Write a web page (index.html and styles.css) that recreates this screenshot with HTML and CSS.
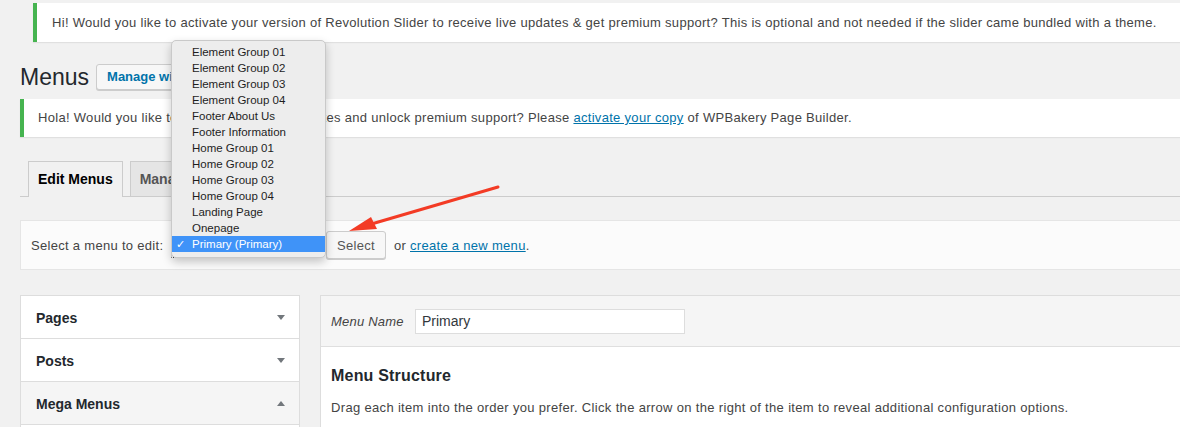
FILE: index.html
```html
<!DOCTYPE html>
<html lang="en">
<head>
<meta charset="utf-8">
<title>Menus</title>
<link rel="stylesheet" href="styles.css">
</head>
<body>
<div class="notice notice-rev"><p>Hi! Would you like to activate your version of Revolution Slider to receive live updates &amp; get premium support? This is optional and not needed if the slider came bundled with a theme.</p></div>
<div class="wrap">
  <div class="title-row">
    <h1 class="page-title">Menus</h1>
    <a class="btn-outline">Manage with Live Preview</a>
  </div>
  <div class="notice notice-vc"><p>Hola! Would you like to receive automatic updates and unlock premium support? Please <a class="link">activate your copy</a> of WPBakery Page Builder.</p></div>
  <nav class="tabs">
    <a class="tab tab-active">Edit Menus</a>
    <a class="tab">Manage Locations</a>
  </nav>
  <div class="manage-menus">
    <label class="manage-label">Select a menu to edit:</label>
    <div class="select-stub"><span class="select-arrow"></span></div>
    <button class="btn">Select</button>
    <span class="manage-or">or <a class="link">create a new menu</a>.</span>
  </div>
  <div class="columns">
    <div class="accordion">
      <div class="acc-section"><h3 class="acc-title">Pages</h3><span class="tri tri-down"></span></div>
      <div class="acc-section"><h3 class="acc-title">Posts</h3><span class="tri tri-down"></span></div>
      <div class="acc-section acc-open"><h3 class="acc-title">Mega Menus</h3><span class="tri tri-up"></span></div>
      <div class="acc-content"></div>
    </div>
    <div class="menu-edit">
      <div class="menu-header">
        <label class="menu-name-label">Menu Name</label>
        <div class="menu-name-input">Primary</div>
      </div>
      <div class="menu-body">
        <h3 class="structure-title">Menu Structure</h3>
        <p class="structure-desc">Drag each item into the order you prefer. Click the arrow on the right of the item to reveal additional configuration options.</p>
      </div>
    </div>
  </div>
</div>

<ul class="popup">
  <li class="popup-item">Element Group 01</li>
  <li class="popup-item">Element Group 02</li>
  <li class="popup-item">Element Group 03</li>
  <li class="popup-item">Element Group 04</li>
  <li class="popup-item">Footer About Us</li>
  <li class="popup-item">Footer Information</li>
  <li class="popup-item">Home Group 01</li>
  <li class="popup-item">Home Group 02</li>
  <li class="popup-item">Home Group 03</li>
  <li class="popup-item">Home Group 04</li>
  <li class="popup-item">Landing Page</li>
  <li class="popup-item">Onepage</li>
  <li class="popup-item popup-selected"><span class="check">&#10003;</span>Primary (Primary)</li>
</ul>

<svg class="red-arrow" width="1180" height="427" viewBox="0 0 1180 427">
  <line x1="498" y1="187" x2="368" y2="225" stroke="#f33b25" stroke-width="3" stroke-linecap="round"/>
  <polygon points="349,231 371,217 377,229" fill="#f33b25"/>
</svg>
</body>
</html>
```

FILE: styles.css
```css
* { box-sizing: border-box; }

html, body {
  margin: 0;
  padding: 0;
}

body {
  width: 1180px;
  height: 427px;
  overflow: hidden;
  position: relative;
  background: #f1f1f1;
  font-family: "Liberation Sans", Arial, sans-serif;
  font-size: 13px;
  color: #444;
}

.link {
  color: #0073aa;
  text-decoration: underline;
}

/* notices */
.notice {
  background: #fff;
  border-left: 4px solid #46b450;
  box-shadow: 0 1px 1px rgba(0, 0, 0, 0.07);
}

.notice p {
  margin: 0;
  line-height: 38px;
  white-space: nowrap;
  letter-spacing: 0.3px;
}

.notice-rev {
  margin: 3px -20px 0 33px;
  padding-left: 15px;
}

.notice-rev p {
  line-height: 39px;
}

.notice-vc {
  margin: 8px -20px 0 0;
  padding-left: 14px;
}

.wrap {
  padding-left: 20px;
}

/* title */
.title-row {
  display: flex;
  align-items: center;
  gap: 7px;
  margin-top: 21px;
  height: 28px;
}

.page-title {
  margin: 0;
  font-size: 23px;
  font-weight: 400;
  color: #23282d;
  line-height: 28px;
}

.btn-outline {
  display: inline-block;
  height: 26px;
  line-height: 24px;
  padding: 0 10px;
  border: 1px solid #ccc;
  border-radius: 3px;
  background: #f7f7f7;
  box-shadow: 0 1px 0 #ccc;
  color: #0073aa;
  font-weight: 700;
  white-space: nowrap;
}

/* tabs */
.tabs {
  display: flex;
  align-items: flex-end;
  gap: 7px;
  margin-top: 24px;
  padding-left: 8px;
  border-bottom: 1px solid #ccc;
  margin-right: -20px;
}

.tab {
  display: block;
  height: 35px;
  line-height: 34px;
  padding: 0 9px;
  border: 1px solid #ccc;
  border-bottom: none;
  background: #e5e5e5;
  color: #555;
  font-size: 14px;
  font-weight: 700;
  white-space: nowrap;
}

.tab-active {
  height: 36px;
  margin-bottom: -1px;
  background: #f1f1f1;
  color: #000;
}

/* manage menus */
.manage-menus {
  display: flex;
  align-items: center;
  margin: 23px -20px 0 0;
  padding: 10px;
  border: 1px solid #e5e5e5;
  background: #fbfbfb;
  letter-spacing: 0.3px;
}

.manage-label {
  flex: 0 0 140px;
  white-space: nowrap;
}

.select-stub {
  position: relative;
  width: 149px;
  height: 26px;
  margin-right: 6px;
  background: #fff;
  border: 1px solid #ddd;
  border-bottom: 1px dotted #333;
}

.select-arrow {
  position: absolute;
  right: 0;
  bottom: 0;
  width: 15px;
  height: 4px;
  background: #555;
}

.btn {
  height: 28px;
  padding: 0 10px;
  border: 1px solid #ccc;
  border-radius: 3px;
  background: #f7f7f7;
  box-shadow: 0 1px 0 #ccc;
  color: #555;
  font-family: inherit;
  font-size: 13px;
  letter-spacing: 0.3px;
}

.manage-or {
  margin-left: 8px;
}

/* columns */
.columns {
  display: flex;
  gap: 20px;
  margin-top: 25px;
  margin-right: -20px;
  align-items: flex-start;
}

.accordion {
  flex: 0 0 280px;
  border: 1px solid #ddd;
  border-bottom: none;
  background: #fff;
}

.acc-section {
  display: flex;
  align-items: center;
  justify-content: space-between;
  height: 43px;
  padding: 1px 15px 0;
  border-bottom: 1px solid #ddd;
  background: #fff;
}

.acc-open {
  background: #f5f5f5;
}

.acc-title {
  margin: 0;
  font-size: 14px;
  font-weight: 700;
  color: #23282d;
}

.tri {
  width: 0;
  height: 0;
  border-left: 4px solid transparent;
  border-right: 4px solid transparent;
  margin-right: -1px;
}

.tri-down {
  border-top: 5px solid #72777c;
}

.tri-up {
  border-bottom: 5px solid #72777c;
}

.acc-content {
  height: 60px;
  background: #fff;
}

.menu-edit {
  flex: 1;
  border: 1px solid #ddd;
  background: #fff;
}

.menu-header {
  display: flex;
  align-items: center;
  height: 51px;
  padding: 1px 10px 0;
  background: #f5f5f5;
  border-bottom: 1px solid #dfdfdf;
}

.menu-name-label {
  flex: 0 0 84px;
  font-style: italic;
  letter-spacing: 0.2px;
}

.menu-name-input {
  width: 270px;
  height: 25px;
  line-height: 23px;
  padding: 0 6px;
  border: 1px solid #ddd;
  background: #fff;
  color: #32373c;
  font-size: 14px;
}

.menu-body {
  padding: 19px 10px 40px;
}

.structure-title {
  margin: 0;
  font-size: 16px;
  line-height: 20px;
  font-weight: 700;
  color: #23282d;
  letter-spacing: 0.2px;
}

.structure-desc {
  margin: 12px 0 0;
  line-height: 20px;
  letter-spacing: 0.33px;
  white-space: nowrap;
}

/* dropdown popup (overlay) */
.popup {
  position: absolute;
  left: 171px;
  top: 40px;
  width: 155px;
  margin: 0;
  padding: 3px 0 5px;
  list-style: none;
  background: #ededed;
  border: 1px solid #c9c9c9;
  border-radius: 5px;
  box-shadow: 0 4px 10px rgba(0, 0, 0, 0.22);
}

.popup-item {
  position: relative;
  height: 16px;
  line-height: 16px;
  padding-left: 20px;
  font-size: 11.5px;
  color: #1e1e1e;
  white-space: nowrap;
}

.popup-selected {
  background: #3f93f8;
  color: #fff;
}

.check {
  position: absolute;
  left: 4px;
  top: 0;
  font-size: 11px;
  color: #fff;
}

.red-arrow {
  position: absolute;
  left: 0;
  top: 0;
  pointer-events: none;
}
```
